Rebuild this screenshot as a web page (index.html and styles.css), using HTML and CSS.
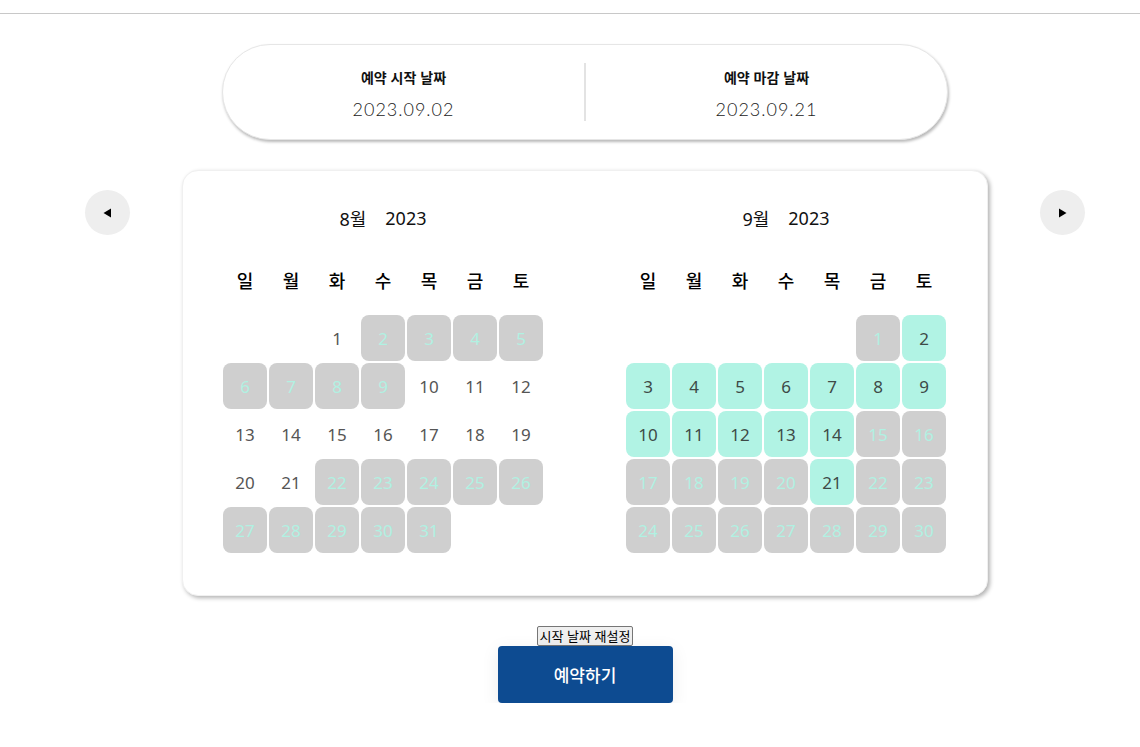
FILE: index.html
```html
<!DOCTYPE html>
<html lang="ko">
<head>
<meta charset="utf-8">
<title>예약</title>
<link rel="stylesheet" href="styles.css">
</head>
<body>
<header class="topbar"></header>
<main class="page">
  <section class="range">
    <div class="range-item">
      <div class="range-label">예약 시작 날짜</div>
      <div class="range-date">2023.09.02</div>
    </div>
    <div class="range-divider"></div>
    <div class="range-item">
      <div class="range-label">예약 마감 날짜</div>
      <div class="range-date">2023.09.21</div>
    </div>
  </section>

  <section class="cal-row">
    <button class="nav-btn" aria-label="이전 달">
      <svg width="9" height="10" viewBox="0 0 9 10"><path d="M8 0.5 L0.5 5 L8 9.5 Z" fill="#000"/></svg>
    </button>
    <div class="card">
      <div class="month">
        <div class="month-title"><span>8월</span><span>2023</span></div>
        <div class="weekdays"><span>일</span><span>월</span><span>화</span><span>수</span><span>목</span><span>금</span><span>토</span></div>
        <div class="days">
          <span class="day empty"></span><span class="day empty"></span>
          <span class="day">1</span>
          <span class="day off">2</span><span class="day off">3</span><span class="day off">4</span><span class="day off">5</span>
          <span class="day off">6</span><span class="day off">7</span><span class="day off">8</span><span class="day off">9</span>
          <span class="day">10</span><span class="day">11</span><span class="day">12</span>
          <span class="day">13</span><span class="day">14</span><span class="day">15</span><span class="day">16</span><span class="day">17</span><span class="day">18</span><span class="day">19</span>
          <span class="day">20</span><span class="day">21</span>
          <span class="day off">22</span><span class="day off">23</span><span class="day off">24</span><span class="day off">25</span><span class="day off">26</span>
          <span class="day off">27</span><span class="day off">28</span><span class="day off">29</span><span class="day off">30</span><span class="day off">31</span>
        </div>
      </div>
      <div class="month">
        <div class="month-title"><span>9월</span><span>2023</span></div>
        <div class="weekdays"><span>일</span><span>월</span><span>화</span><span>수</span><span>목</span><span>금</span><span>토</span></div>
        <div class="days">
          <span class="day empty"></span><span class="day empty"></span><span class="day empty"></span><span class="day empty"></span><span class="day empty"></span>
          <span class="day off">1</span><span class="day sel">2</span>
          <span class="day sel">3</span><span class="day sel">4</span><span class="day sel">5</span><span class="day sel">6</span><span class="day sel">7</span><span class="day sel">8</span><span class="day sel">9</span>
          <span class="day sel">10</span><span class="day sel">11</span><span class="day sel">12</span><span class="day sel">13</span><span class="day sel">14</span><span class="day off">15</span><span class="day off">16</span>
          <span class="day off">17</span><span class="day off">18</span><span class="day off">19</span><span class="day off">20</span><span class="day sel">21</span><span class="day off">22</span><span class="day off">23</span>
          <span class="day off">24</span><span class="day off">25</span><span class="day off">26</span><span class="day off">27</span><span class="day off">28</span><span class="day off">29</span><span class="day off">30</span>
        </div>
      </div>
    </div>
    <button class="nav-btn" aria-label="다음 달">
      <svg width="9" height="10" viewBox="0 0 9 10"><path d="M1 0.5 L8.5 5 L1 9.5 Z" fill="#000"/></svg>
    </button>
  </section>

  <section class="actions">
    <button class="reset-btn">시작 날짜 재설정</button>
    <button class="book-btn">예약하기</button>
  </section>
</main>
</body>
</html>
```

FILE: styles.css
```css
* { box-sizing: border-box; }
html, body { margin: 0; padding: 0; background: #fff; }
body {
  font-family: "Noto Sans", "Noto Sans CJK KR", sans-serif;
  color: #000;
}
.topbar {
  height: 14px;
  border-bottom: 1px solid #c8c8c8;
}
.page {
  padding-left: 30px;
  display: flex;
  flex-direction: column;
  align-items: center;
}
.range {
  margin-top: 30px;
  width: 726px;
  height: 96px;
  padding-top: 4px;
  border-radius: 48px;
  border: 1px solid #e6e6e6;
  box-shadow: 1px 2px 3px rgba(0,0,0,0.28);
  display: flex;
  align-items: center;
  background: #fff;
}
.range-item {
  flex: 1;
  display: flex;
  flex-direction: column;
  align-items: center;
}
.range-label {
  font-family: "Noto Sans CJK KR", sans-serif;
  font-weight: 700;
  font-size: 14px;
  line-height: 20px;
  color: #111;
}
.range-date {
  margin-top: 10px;
  font-family: "Lato", "Noto Sans", sans-serif;
  font-weight: 300;
  font-size: 18px;
  letter-spacing: 1px;
  line-height: 24px;
  color: #222;
}
.range-divider {
  width: 2px;
  height: 58px;
  margin-top: -4px;
  background: #e3e3e3;
}
.cal-row {
  margin-top: 30px;
  display: flex;
  align-items: flex-start;
  gap: 52px;
}
.nav-btn {
  margin-top: 20px;
  width: 45px;
  height: 45px;
  border-radius: 50%;
  border: none;
  background: #eeeeee;
  display: flex;
  align-items: center;
  justify-content: center;
  padding: 0;
}
.card {
  width: 806px;
  background: #fff;
  border-radius: 16px;
  border: 1px solid #f0f0f0;
  box-shadow: 2px 2px 4px rgba(0,0,0,0.3);
  padding: 29px 41px 42px 40px;
  display: flex;
  justify-content: space-between;
}
.month {
  width: 320px;
  display: flex;
  flex-direction: column;
}
.month-title {
  height: 36px;
  display: flex;
  justify-content: center;
  align-items: center;
  gap: 19px;
  font-family: "Noto Sans", "Noto Sans CJK KR", sans-serif;
  font-size: 18px;
  color: #111;
}
.weekdays {
  margin-top: 26px;
  height: 36px;
  display: grid;
  grid-template-columns: repeat(7, 44px);
  column-gap: 2px;
  align-items: center;
  text-align: center;
  font-family: "Noto Sans CJK KR", sans-serif;
  font-weight: 500;
  font-size: 18px;
  color: #000;
}
.days {
  margin-top: 17px;
  display: grid;
  grid-template-columns: repeat(7, 44px);
  grid-auto-rows: 46px;
  gap: 2px;
}
.day {
  display: flex;
  align-items: center;
  justify-content: center;
  border-radius: 8px;
  font-size: 17px;
  color: #555;
}
.day.off {
  background: #cfcfcf;
  color: #b1f1e2;
}
.day.sel {
  background: #b1f3e4;
  color: #3e4a47;
}
.actions {
  margin-top: 30px;
  display: flex;
  flex-direction: column;
  align-items: center;
}
.reset-btn {
  font-family: "Noto Sans CJK KR", sans-serif;
  font-size: 13px;
  line-height: 16px;
  height: 20px;
  padding: 1px 1px;
  border: 1px solid #767676;
  border-radius: 2px;
  background: #efefef;
  color: #000;
}
.book-btn {
  width: 175px;
  height: 57px;
  border: none;
  border-radius: 4px;
  background: #0d4b91;
  color: #fff;
  font-family: "Noto Sans CJK KR", sans-serif;
  font-size: 17px;
  font-weight: 500;
  box-shadow: 0 4px 18px rgba(0,0,0,0.08);
}
```
